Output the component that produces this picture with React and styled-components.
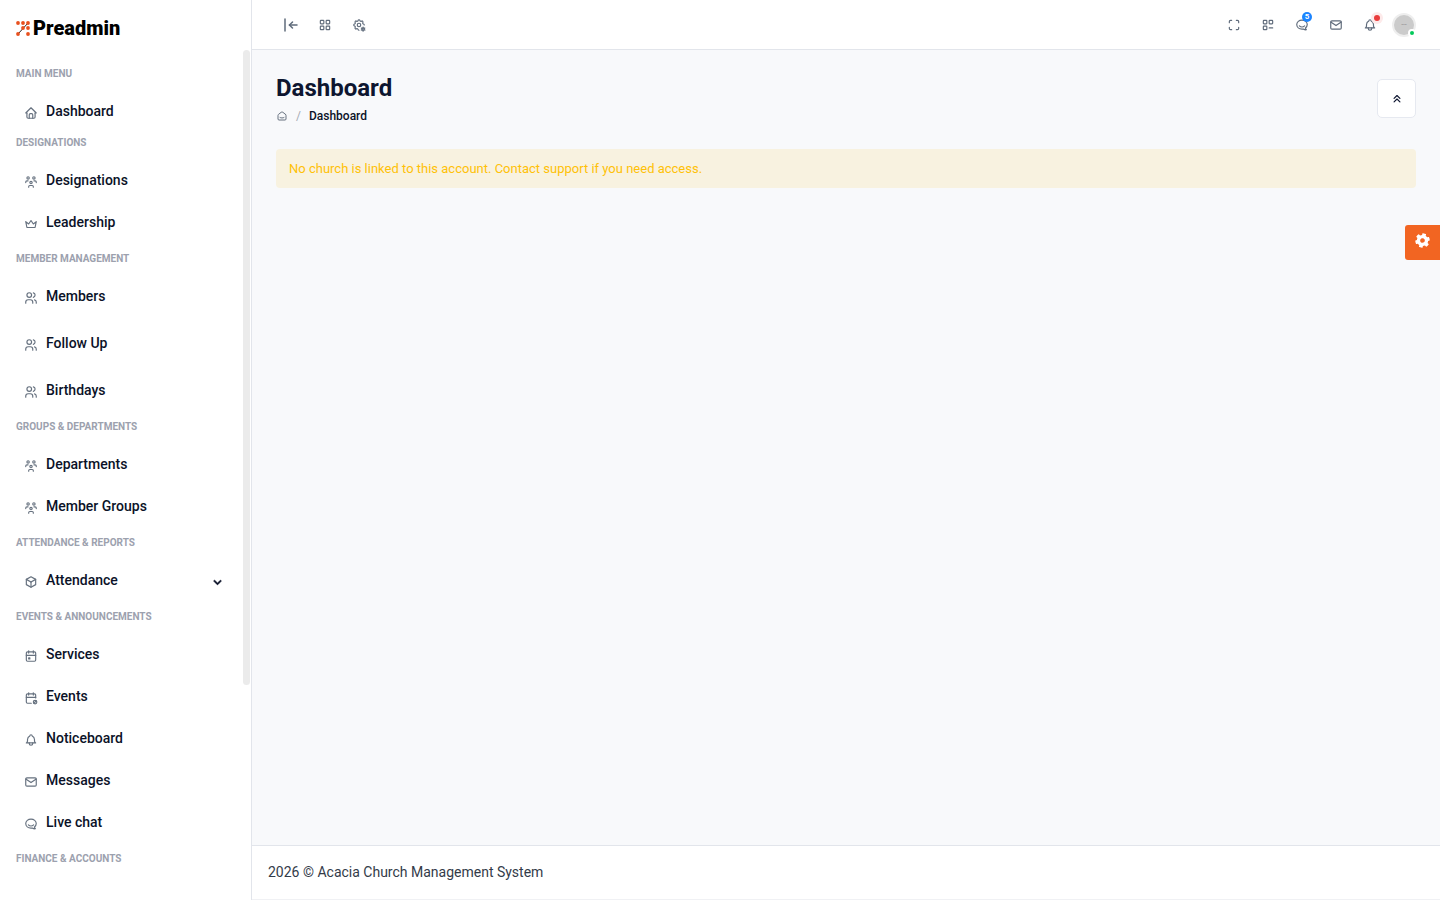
import React from "react";
import styled, { createGlobalStyle } from "styled-components";
import {
  TbHome,
  TbUsersGroup,
  TbCrown,
  TbUsers,
  TbBox,
  TbCalendarEvent,
  TbCalendarCancel,
  TbBell,
  TbMail,
  TbBrandHipchat,
  TbArrowBarToLeft,
  TbLayoutGrid,
  TbSettingsCog,
  TbMaximize,
  TbLayoutGridRemove,
  TbSmartHome,
  TbChevronsUp,
} from "react-icons/tb";
import { FaChevronDown, FaCog } from "react-icons/fa";

const GlobalStyle = createGlobalStyle`
  *, *::before, *::after { box-sizing: border-box; }
  body {
    margin: 0;
    font-family: Roboto, "Liberation Sans", sans-serif;
    font-size: 14px;
    line-height: 21px;
    color: #333b49;
    background: #f8f9fb;
  }
  button { font: inherit; color: inherit; padding: 0; cursor: pointer; }
  a { color: inherit; text-decoration: none; }
  ul, ol { list-style: none; margin: 0; padding: 0; }
`;

const Layout = styled.div`
  display: grid;
  grid-template-columns: 252px minmax(0, 1fr);
  min-height: 100vh;
`;

const Sidebar = styled.aside`
  position: sticky;
  top: 0;
  height: 100vh;
  display: flex;
  flex-direction: column;
  background: #fff;
  border-right: 1px solid #e2e5eb;
  overflow: hidden;
`;

const Logo = styled.a`
  flex: none;
  display: flex;
  align-items: center;
  gap: 3px;
  height: 50px;
  padding: 6px 16px 0;
  color: #000;
  font-size: 20px;
  line-height: 24px;
  font-weight: 900;
`;

const MenuScroll = styled.nav`
  position: relative;
  flex: 1;
  min-height: 0;
  overflow: hidden;
  padding: 11px 16px 0;
`;

const ScrollThumb = styled.div`
  position: absolute;
  top: 0;
  right: 1px;
  width: 7px;
  height: 74.7%;
  border-radius: 7px;
  background: #ebebeb;
`;

const MenuGroup = styled.section`
  padding-bottom: ${(p) => (p.$tight ? 0 : 5)}px;
`;

const GroupTitle = styled.h2`
  margin: 0 0 7px;
  font-size: 10px;
  line-height: 25px;
  font-weight: 700;
  text-transform: uppercase;
  color: #9ca1ae;
`;

const MenuList = styled.ul`
  display: flex;
  flex-direction: column;
  gap: ${(p) => (p.$wide ? 10 : 5)}px;
`;

const MenuLink = styled.a`
  display: flex;
  align-items: center;
  height: 37px;
  padding: 0 13px 0 8px;
  font-weight: 500;
  color: #0b1228;

  > svg:first-child {
    width: 14px;
    height: 14px;
    margin: 2px 8px 0 0;
    color: #66717f;
  }
`;

const Caret = styled(FaChevronDown)`
  width: 9px;
  height: 9px;
  margin: 4px 0 0 auto;
  stroke: currentColor;
  stroke-width: 30px;
`;

const Page = styled.div`
  display: flex;
  flex-direction: column;
  min-width: 0;
`;

const Header = styled.header`
  display: flex;
  align-items: center;
  justify-content: space-between;
  height: 50px;
  padding: 0 24px;
  background: #fff;
  border-bottom: 1px solid #e2e5eb;
`;

const Tools = styled.div`
  display: flex;
  align-items: center;
  gap: 10px;
`;

const ToolButton = styled.button`
  position: relative;
  display: flex;
  align-items: center;
  justify-content: center;
  width: 24px;
  height: 24px;
  border: 0;
  background: none;
  color: #5f6b7b;
  svg { width: 14px; height: 14px; }
`;

const CollapseMenuButton = styled(ToolButton)`
  width: 27px;
  padding-left: 3px;
  svg { width: 18px; height: 18px; }
`;

const CountBadge = styled.span`
  position: absolute;
  top: -1px;
  right: 2px;
  width: 10px;
  height: 10px;
  border-radius: 50%;
  background: #1b84ff;
  color: #fff;
  font-size: 8px;
  line-height: 10px;
  font-weight: 700;
  text-align: center;
`;

const AlertDot = styled.span`
  position: absolute;
  top: 2px;
  right: 2px;
  width: 6px;
  height: 6px;
  border-radius: 50%;
  background: #e93c3c;
  box-shadow: 0 0 0 3px #fdeaea;
`;

const Avatar = styled.button`
  position: relative;
  width: 24px;
  height: 24px;
  border: 2px solid #eeeeee;
  border-radius: 50%;
  background: #cbcbcb;
  color: #a4a4a4;
  font-size: 10px;
  line-height: 20px;
  &::after {
    content: "";
    position: absolute;
    right: -2px;
    bottom: -2px;
    width: 8px;
    height: 8px;
    border: 2px solid #fff;
    border-radius: 50%;
    background: #03c95a;
  }
`;

const Content = styled.main`
  flex: 1;
  padding: 24px;
`;

const TitleRow = styled.div`
  display: flex;
  align-items: center;
  justify-content: space-between;
  margin-bottom: 24px;
`;

const Title = styled.h1`
  margin: 0 0 4px;
  font-size: 24px;
  line-height: 29px;
  font-weight: 700;
  color: #0e1630;
`;

const Breadcrumb = styled.ol`
  display: flex;
  align-items: center;
  font-size: 12px;
  line-height: 18px;
  font-weight: 500;
  color: #0b1228;
  li, a { display: flex; align-items: center; }
  li + li::before {
    content: "/";
    padding: 0 8px;
    font-weight: 400;
    color: #a6abb5;
  }
  svg { width: 12px; height: 12px; color: #66717f; }
`;

const CollapseButton = styled.button`
  display: flex;
  align-items: center;
  justify-content: center;
  width: 39px;
  height: 39px;
  margin-bottom: 2px;
  border: 1px solid #e6e9f0;
  border-radius: 5px;
  background: #fff;
  color: #0e1630;
  svg { width: 14px; height: 14px; }
`;

const Notice = styled.div`
  padding: 10px 13px;
  border-radius: 4px;
  background: #f8f2e0;
  color: #ffc107;
  font-size: 13px;
  line-height: 19px;
`;

const Footer = styled.footer`
  padding: 16px;
  border-top: 1px solid #e2e5eb;
  border-bottom: 1px solid #f0f1f4;
  background: #fff;
  p { margin: 0; }
`;

const SettingsTab = styled.button`
  position: fixed;
  top: 225px;
  right: 0;
  display: flex;
  align-items: center;
  justify-content: center;
  width: 35px;
  height: 35px;
  padding-bottom: 4px;
  border: 0;
  border-radius: 3px 0 0 3px;
  background: #f26522;
  color: #fff;
  svg { width: 15px; height: 15px; transform: rotate(15deg); }
`;

const groups = [
  { title: "Main Menu", tight: true, items: [["Dashboard", TbHome]] },
  { title: "Designations", items: [["Designations", TbUsersGroup], ["Leadership", TbCrown]] },
  {
    title: "Member Management",
    wide: true,
    items: [["Members", TbUsers], ["Follow Up", TbUsers], ["Birthdays", TbUsers]],
  },
  {
    title: "Groups & Departments",
    items: [["Departments", TbUsersGroup], ["Member Groups", TbUsersGroup]],
  },
  { title: "Attendance & Reports", items: [["Attendance", TbBox, true]] },
  {
    title: "Events & Announcements",
    items: [
      ["Services", TbCalendarEvent],
      ["Events", TbCalendarCancel],
      ["Noticeboard", TbBell],
      ["Messages", TbMail],
      ["Live chat", TbBrandHipchat],
    ],
  },
  { title: "Finance & Accounts", items: [] },
];

function LogoMark() {
  const dots = [[2, 2], [7, 2], [12, 2], [7, 7], [12, 7], [2, 13], [12, 13]];
  return (
    <svg width="14" height="15" viewBox="0 0 14 15" aria-hidden="true">
      <path d="M2 13L12 2" stroke="#222" strokeWidth="1" />
      {dots.map(([x, y]) => (
        <circle key={`${x}-${y}`} cx={x} cy={y} r="1.9" fill="#e8501e" />
      ))}
    </svg>
  );
}

export default function App() {
  return (
    <>
      <GlobalStyle />
      <Layout>
        <Sidebar>
          <Logo href="#">
            <LogoMark />
            Preadmin
          </Logo>
          <MenuScroll aria-label="Main">
            {groups.map((g) => (
              <MenuGroup key={g.title} $tight={g.tight}>
                <GroupTitle>{g.title}</GroupTitle>
                <MenuList $wide={g.wide}>
                  {g.items.map(([label, Icon, expandable]) => (
                    <li key={label}>
                      <MenuLink href="#">
                        <Icon />
                        {label}
                        {expandable && <Caret />}
                      </MenuLink>
                    </li>
                  ))}
                </MenuList>
              </MenuGroup>
            ))}
            <ScrollThumb />
          </MenuScroll>
        </Sidebar>
        <Page>
          <Header>
            <Tools>
              <CollapseMenuButton aria-label="Collapse sidebar"><TbArrowBarToLeft /></CollapseMenuButton>
              <ToolButton aria-label="Applications"><TbLayoutGrid /></ToolButton>
              <ToolButton aria-label="Settings"><TbSettingsCog /></ToolButton>
            </Tools>
            <Tools>
              <ToolButton aria-label="Full screen"><TbMaximize /></ToolButton>
              <ToolButton aria-label="Shortcuts"><TbLayoutGridRemove /></ToolButton>
              <ToolButton aria-label="Chat">
                <TbBrandHipchat />
                <CountBadge>5</CountBadge>
              </ToolButton>
              <ToolButton aria-label="Mail"><TbMail /></ToolButton>
              <ToolButton aria-label="Notifications">
                <TbBell />
                <AlertDot />
              </ToolButton>
              <Avatar aria-label="Profile">--</Avatar>
            </Tools>
          </Header>
          <Content>
            <TitleRow>
              <div>
                <Title>Dashboard</Title>
                <Breadcrumb>
                  <li><a href="#" aria-label="Home"><TbSmartHome /></a></li>
                  <li>Dashboard</li>
                </Breadcrumb>
              </div>
              <CollapseButton aria-label="Collapse header"><TbChevronsUp /></CollapseButton>
            </TitleRow>
            <Notice role="alert">
              No church is linked to this account. Contact support if you need access.
            </Notice>
          </Content>
          <Footer>
            <p>2026 © Acacia Church Management System</p>
          </Footer>
        </Page>
      </Layout>
      <SettingsTab aria-label="Theme settings"><FaCog /></SettingsTab>
    </>
  );
}
